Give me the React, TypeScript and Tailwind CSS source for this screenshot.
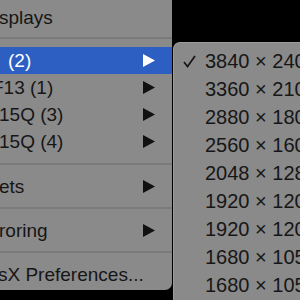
import React from 'react';

type Row = { label: string; arrow?: boolean; active?: boolean; shift?: string };

const font = { fontFamily: '"Liberation Sans", Arial, sans-serif' };

const Arrow = ({ white }: { white?: boolean }) => (
  <svg width="12" height="13" viewBox="0 0 12 13" className="shrink-0">
    <path d="M0 0 L12 6.5 L0 13 Z" fill={white ? '#ffffff' : '#111111'} />
  </svg>
);

const Sep = ({ top = 'pt-[8px]' }: { top?: string }) => (
  <div className={`${top} pb-[8px]`}>
    <div className="h-[2px] bg-[#7b7b7b]" />
  </div>
);

const MenuRow = ({ label, arrow, active, shift = 'ml-0', h = 'h-[27px]' }: Row & { h?: string }) => (
  <div
    className={`${h} flex items-center justify-between pr-[17px] ${active ? 'bg-[#2d5fc2] text-white' : 'text-[#161616]'}`}
  >
    <span className={`${shift} whitespace-nowrap`}>{label}</span>
    {arrow && <Arrow white={active} />}
  </div>
);

const resolutions = [
  '3840 × 2400',
  '3360 × 2100',
  '2880 × 1800',
  '2560 × 1600',
  '2048 × 1280',
  '1920 × 1200',
  '1920 × 1200',
  '1680 × 1050',
  '1680 × 1050',
];

export default function App() {
  return (
    <div className="w-[300px] h-[300px] bg-black relative overflow-hidden text-[19px] leading-none" style={font}>
      {/* main menu, clipped on the left by the window edge */}
      <div className="w-[172px] h-[290px] bg-[#8a8a8a] rounded-br-[7px] overflow-hidden">
        <div className="h-[34px] flex items-center text-[#161616]">
          <span className="-ml-[1px]">splays</span>
        </div>
        <Sep top="pt-[3px]" />
        <MenuRow label="(2)" arrow active shift="ml-[8px]" />
        <MenuRow label="F13 (1)" arrow shift="-ml-[8px]" />
        <MenuRow label="15Q (3)" arrow shift="-ml-[1px]" />
        <MenuRow label="15Q (4)" arrow shift="-ml-[1px]" />
        <Sep />
        <MenuRow label="ets" arrow h="h-[26px]" shift="-ml-[1px]" />
        <Sep />
        <MenuRow label="roring" arrow h="h-[26px]" shift="-ml-[1px]" />
        <Sep />
        <MenuRow label="sX Preferences..." h="h-[26px]" shift="-ml-[2px]" />
      </div>

      {/* resolution submenu */}
      <div className="absolute left-[173px] top-[42px] w-[160px] h-[280px] bg-[#8a8a8a] rounded-tl-[7px] border-l border-t border-[#9c9c9c] pt-[4px] text-[20px]">
        {resolutions.map((r, i) => (
          <div key={i} className="h-[28px] flex items-center text-[#161616]">
            <div className="w-[31px] pl-[9px] shrink-0">
              {i === 0 && (
                <svg width="13" height="13" viewBox="0 0 13 13">
                  <path d="M1 7 L4.5 11.5 L12 1" fill="none" stroke="#161616" strokeWidth="1.7" />
                </svg>
              )}
            </div>
            <span className="whitespace-nowrap">{r}</span>
          </div>
        ))}
      </div>
    </div>
  );
}
